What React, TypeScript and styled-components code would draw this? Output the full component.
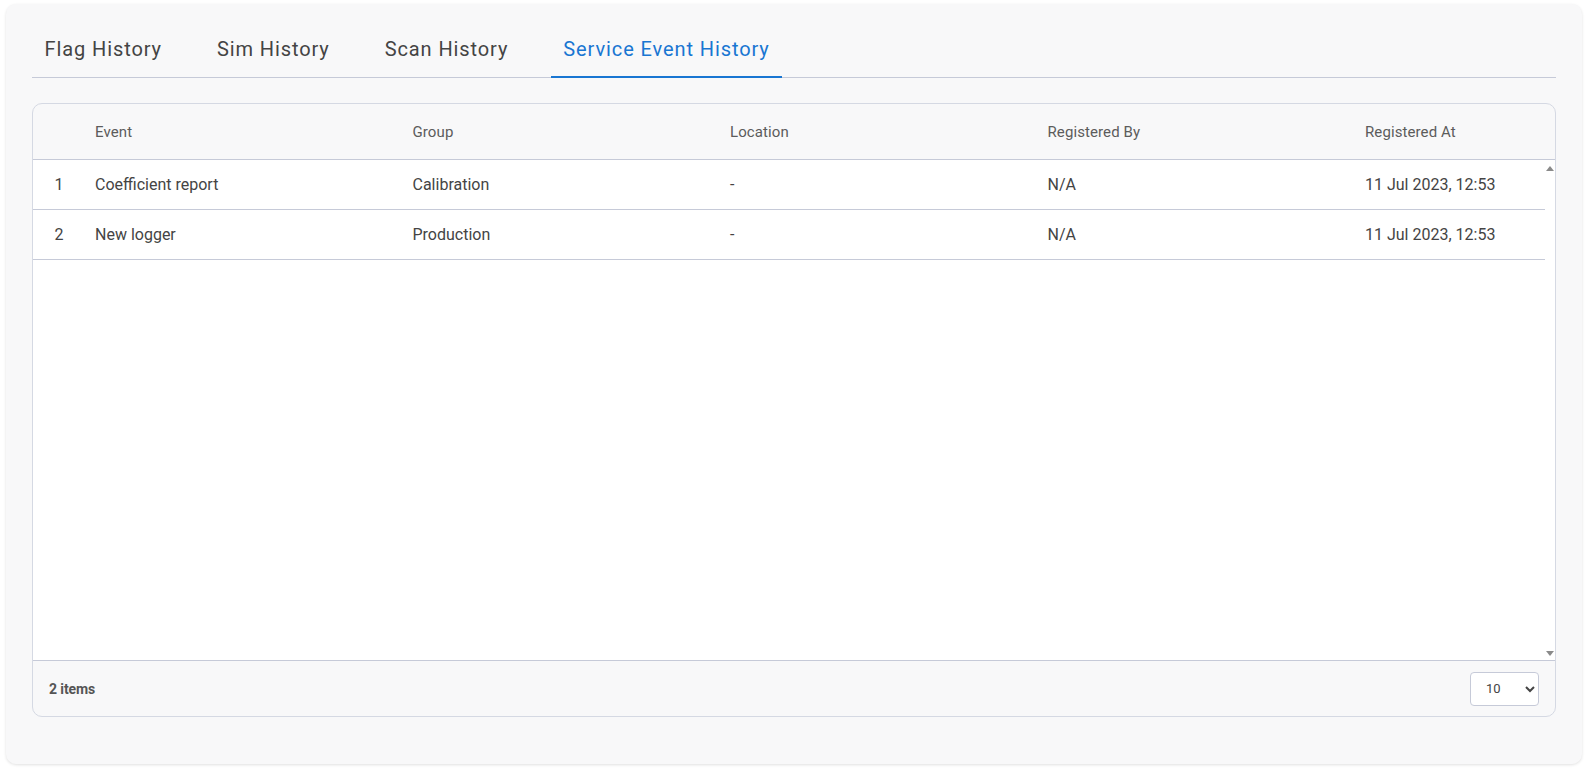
import React from 'react';
import styled, { createGlobalStyle } from 'styled-components';

const GlobalStyle = createGlobalStyle`
  html, body {
    margin: 0;
    padding: 0;
    background: #fff;
    font-family: Roboto, "Liberation Sans", sans-serif;
  }
`;

const Page = styled.div`
  padding: 4px 6px 0;
  width: 1588px;
  height: 768px;
  box-sizing: border-box;
  overflow: hidden;
`;

const Card = styled.main`
  box-sizing: border-box;
  height: 760px;
  padding: 20px 26px 0;
  background: #f8f8f9;
  border-radius: 10px;
  box-shadow: 0 1px 3px rgba(0, 0, 0, 0.12);
`;

const Tabs = styled.nav`
  display: flex;
  gap: 30px;
  height: 53px;
  border-bottom: 1px solid #c6cad8;
`;

const Tab = styled.div<{ $active?: boolean }>`
  box-sizing: border-box;
  height: 54px;
  padding: 13px 12.5px 0;
  font-size: 20px;
  line-height: 24px;
  letter-spacing: 0.9px;
  color: ${(p) => (p.$active ? '#1976d2' : '#444444')};
  border-bottom: 2px solid ${(p) => (p.$active ? '#1976d2' : 'transparent')};
`;

const TableBox = styled.section`
  margin-top: 25px;
  height: 614px;
  box-sizing: border-box;
  display: flex;
  flex-direction: column;
  border: 1px solid #d5d9e3;
  border-radius: 10px;
  overflow: hidden;
`;

const columns = '62px repeat(4, 317.5px) 1fr';

const HeadRow = styled.div`
  display: grid;
  grid-template-columns: ${columns};
  align-items: center;
  height: 56px;
  box-sizing: border-box;
  flex: none;
  border-bottom: 1px solid #c6cad8;
  font-size: 15px;
  letter-spacing: 0.1px;
  color: #5c5c5c;
`;

const Body = styled.div`
  flex: 1;
  display: flex;
  background: #fff;
  min-height: 0;
`;

const Rows = styled.div`
  flex: 1;
`;

const Row = styled.div`
  display: grid;
  grid-template-columns: ${columns};
  align-items: center;
  height: 50px;
  box-sizing: border-box;
  border-bottom: 1px solid #c6cad8;
  font-size: 16px;
  color: #444444;
`;

const IndexCell = styled.div`
  text-align: center;
  padding-right: 10px;
`;

const Scrollbar = styled.div`
  width: 10px;
  flex: none;
  display: flex;
  flex-direction: column;
  justify-content: space-between;
  align-items: center;
  padding: 6px 0 4px;
  box-sizing: border-box;
`;

const Arrow = styled.span<{ $down?: boolean }>`
  width: 0;
  height: 0;
  border-left: 4px solid transparent;
  border-right: 4px solid transparent;
  ${(p) => (p.$down ? 'border-top: 5px solid #8a8a8a;' : 'border-bottom: 5px solid #8a8a8a;')}
`;

const Footer = styled.footer`
  height: 56px;
  box-sizing: border-box;
  flex: none;
  display: flex;
  align-items: center;
  justify-content: space-between;
  padding: 0 16px;
  border-top: 1px solid #c6cad8;
`;

const ItemCount = styled.span`
  font-size: 14px;
  font-weight: 700;
  letter-spacing: -0.1px;
  color: #555555;
`;

const PageSize = styled.select`
  width: 69px;
  height: 34px;
  box-sizing: border-box;
  padding: 0 0 0 11px;
  background: #fff;
  border: 1px solid #c6cad8;
  border-radius: 4px;
  font-family: Roboto, "Liberation Sans", sans-serif;
  font-size: 13px;
  color: #444444;
`;

const tabs = ['Flag History', 'Sim History', 'Scan History', 'Service Event History'];
const headers = ['', 'Event', 'Group', 'Location', 'Registered By', 'Registered At'];
const events = [
  { id: 1, event: 'Coefficient report', group: 'Calibration', location: '-', by: 'N/A', at: '11 Jul 2023, 12:53' },
  { id: 2, event: 'New logger', group: 'Production', location: '-', by: 'N/A', at: '11 Jul 2023, 12:53' },
];

const App = () => {
  return (
    <Page>
      <GlobalStyle />
      <Card>
        <Tabs>
          {tabs.map((tab, idx) => (
            <Tab key={tab} $active={idx === tabs.length - 1}>
              {tab}
            </Tab>
          ))}
        </Tabs>
        <TableBox>
          <HeadRow>
            {headers.map((text, idx) => (
              <div key={idx}>{text}</div>
            ))}
          </HeadRow>
          <Body>
            <Rows>
              {events.map((row) => (
                <Row key={row.id}>
                  <IndexCell>{row.id}</IndexCell>
                  <div>{row.event}</div>
                  <div>{row.group}</div>
                  <div>{row.location}</div>
                  <div>{row.by}</div>
                  <div>{row.at}</div>
                </Row>
              ))}
            </Rows>
            <Scrollbar>
              <Arrow />
              <Arrow $down />
            </Scrollbar>
          </Body>
          <Footer>
            <ItemCount>2 items</ItemCount>
            <PageSize defaultValue="10">
              <option value="10">10</option>
              <option value="25">25</option>
              <option value="50">50</option>
            </PageSize>
          </Footer>
        </TableBox>
      </Card>
    </Page>
  );
};

export default App;
